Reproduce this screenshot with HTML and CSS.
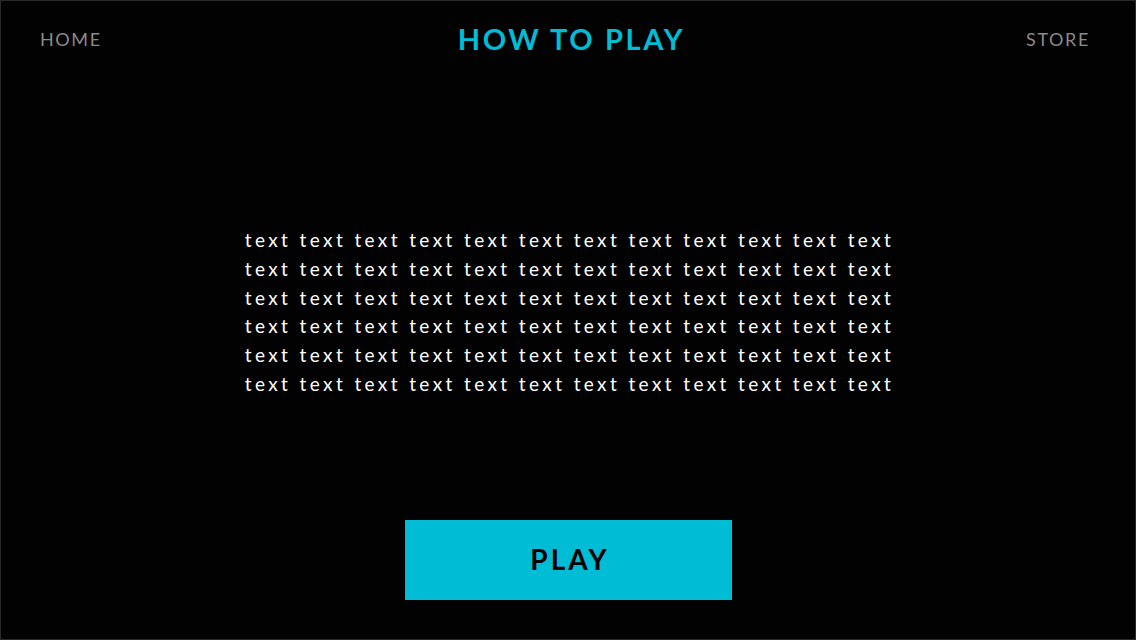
FILE: index.html
```html
<!DOCTYPE html>
<html>
<head>
<meta charset="utf-8">
<link rel="stylesheet" href="styles.css">
</head>
<body>
<div class="page">
  <header class="header">
    <a class="nav nav-left">HOME</a>
    <h1 class="title">HOW TO PLAY</h1>
    <a class="nav nav-right">STORE</a>
  </header>
  <main class="content">
    <p class="body-text">text text text text text text text text text text text text<br>text text text text text text text text text text text text<br>text text text text text text text text text text text text<br>text text text text text text text text text text text text<br>text text text text text text text text text text text text<br>text text text text text text text text text text text text</p>
  </main>
  <button class="play">PLAY</button>
</div>
</body>
</html>
```
FILE: styles.css
```css
html, body {
  margin: 0;
  padding: 0;
  background: #020202;
}
.page {
  width: 1136px;
  height: 640px;
  box-sizing: border-box;
  border: 1px solid #2a2a2a;
  background: #020202;
  display: flex;
  flex-direction: column;
  align-items: center;
  font-family: Lato, "Noto Sans", sans-serif;
}
.header {
  width: 100%;
  box-sizing: border-box;
  display: grid;
  grid-template-columns: 1fr auto 1fr;
  align-items: center;
  padding: 20px 45px 0 39px;
}
.nav {
  color: #8a8a8a;
  font-size: 18px;
  letter-spacing: 1.6px;
  line-height: 32px;
}
.nav-right {
  justify-self: end;
}
.title {
  margin: 0 0 0 13px;
  color: #00bcd4;
  font-size: 29px;
  font-weight: 700;
  letter-spacing: 2.6px;
  line-height: 36px;
}
.content {
  margin-top: 169px;
  padding-left: 3px;
}
.body-text {
  margin: 0;
  color: #ffffff;
  font-size: 19px;
  letter-spacing: 3.4px;
  line-height: 28.8px;
  text-align: center;
}
.play {
  margin-top: auto;
  margin-bottom: 39px;
  width: 327px;
  height: 80px;
  border: none;
  background: #00bcd4;
  color: #000;
  font-family: Lato, "Noto Sans", sans-serif;
  font-size: 28px;
  font-weight: 700;
  letter-spacing: 3px;
  padding: 0 0 3px 4px;
}
```
